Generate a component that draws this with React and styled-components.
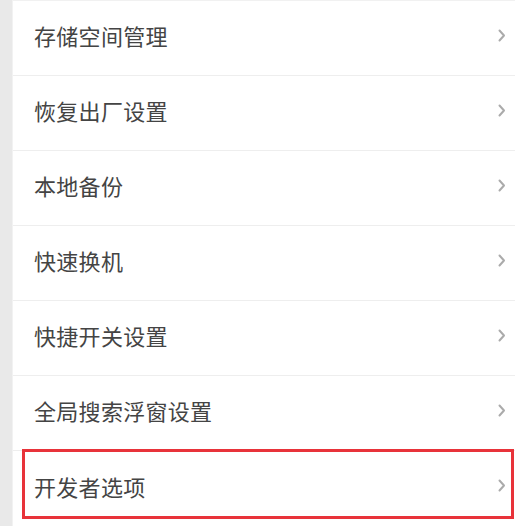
import styled, { createGlobalStyle } from 'styled-components';

const GlobalStyle = createGlobalStyle`
    html, body {
        margin: 0;
        padding: 0;
        background-color: #ffffff;
    }
`;

const Page = styled.div`
    display: flex;
    width: 520px;
    height: 526px;
    overflow: hidden;
    background-color: #ffffff;
`;

const Strip = styled.div`
    width: 12px;
    flex-shrink: 0;
    background-color: #e9e9e9;
    border-right: 1px solid #f2f2f2;
`;

const List = styled.div`
    width: 502px;
    display: flex;
    flex-direction: column;
    border-top: 1px solid #f1f1f1;
`;

const Row = styled.div`
    position: relative;
    height: 74px;
    box-sizing: border-box;
    display: flex;
    align-items: center;
    justify-content: space-between;
    padding: 0 9px 6px 21px;
    border-bottom: ${(p) => (p.$last ? 'none' : '1px solid #eeeeee')};
    flex-shrink: 0;
    height: 75px;
`;

const Label = styled.span`
    font-family: "Noto Sans CJK SC", "Noto Sans", sans-serif;
    font-size: 22px;
    color: #444444;
    letter-spacing: 0.3px;
`;

const Chevron = styled.svg`
    width: 8px;
    height: 13px;
`;

const Highlight = styled.div`
    position: absolute;
    left: 9px;
    right: 1px;
    top: -2px;
    bottom: 7px;
    border: 3px solid #e8333a;
    pointer-events: none;
`;

const items = ['存储空间管理', '恢复出厂设置', '本地备份', '快速换机', '快捷开关设置', '全局搜索浮窗设置', '开发者选项'];

function App() {
    return (
        <Page>
            <GlobalStyle />
            <Strip />
            <List>
                {items.map((item, index) => {
                    const last = index === items.length - 1;
                    return (
                        <Row key={index} $last={last}>
                            <Label>{item}</Label>
                            <Chevron viewBox="0 0 8 13">
                                <path d="M1.5 1.5 L6 6.5 L1.5 11.5" fill="none" stroke="#ababab" strokeWidth="2" strokeLinecap="round" strokeLinejoin="round" />
                            </Chevron>
                            {last && <Highlight />}
                        </Row>
                    );
                })}
            </List>
        </Page>
    );
}

export default App;
